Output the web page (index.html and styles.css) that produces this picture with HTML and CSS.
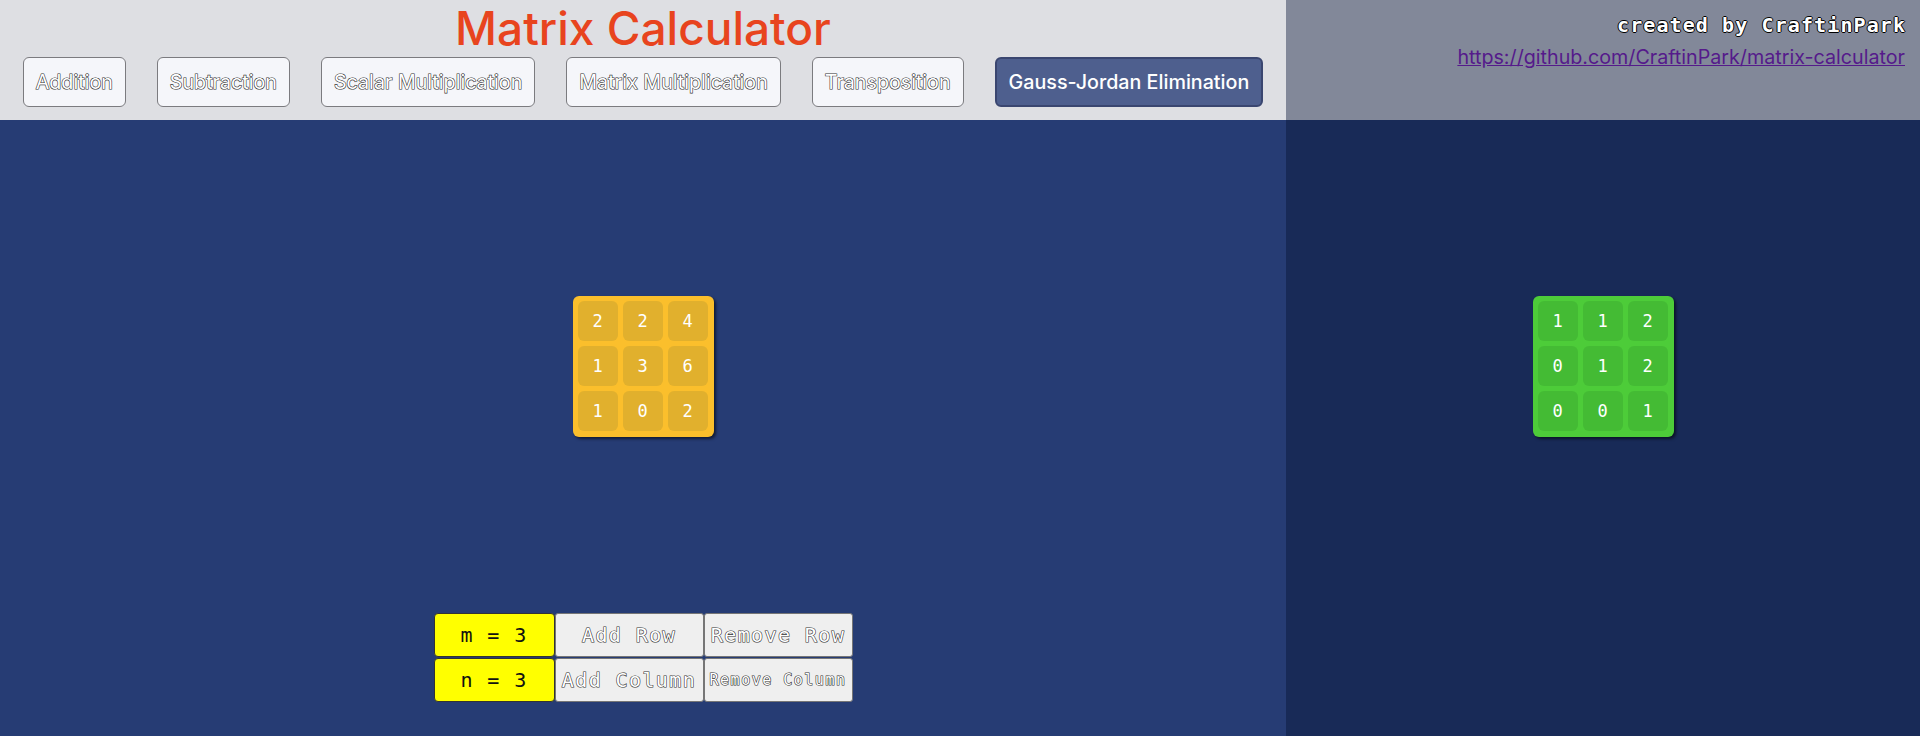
FILE: index.html
```html
<!DOCTYPE html>
<html lang="en">
<head>
<meta charset="utf-8">
<title>Matrix Calculator</title>
<link rel="stylesheet" href="styles.css">
</head>
<body>
<div class="app">
  <header class="top-left">
    <h1 class="title">Matrix Calculator</h1>
    <nav class="ops">
      <button class="op">Addition</button>
      <button class="op">Subtraction</button>
      <button class="op">Scalar Multiplication</button>
      <button class="op">Matrix Multiplication</button>
      <button class="op">Transposition</button>
      <button class="op op-active">Gauss-Jordan Elimination</button>
    </nav>
  </header>
  <header class="top-right">
    <div class="credit">created by CraftinPark</div>
    <a class="repo" href="#">https://github.com/CraftinPark/matrix-calculator</a>
  </header>
  <main class="panel panel-input">
    <div class="stage">
      <div class="matrix matrix-yellow">
        <div class="cell">2</div><div class="cell">2</div><div class="cell">4</div>
        <div class="cell">1</div><div class="cell">3</div><div class="cell">6</div>
        <div class="cell">1</div><div class="cell">0</div><div class="cell">2</div>
      </div>
    </div>
    <div class="controls">
      <div class="dim">m = 3</div>
      <button class="ctl">Add Row</button>
      <button class="ctl">Remove Row</button>
      <div class="dim">n = 3</div>
      <button class="ctl">Add Column</button>
      <button class="ctl ctl-small">Remove Column</button>
    </div>
  </main>
  <section class="panel panel-output">
    <div class="stage">
      <div class="matrix matrix-green">
        <div class="cell">1</div><div class="cell">1</div><div class="cell">2</div>
        <div class="cell">0</div><div class="cell">1</div><div class="cell">2</div>
        <div class="cell">0</div><div class="cell">0</div><div class="cell">1</div>
      </div>
    </div>
  </section>
</div>
</body>
</html>
```

FILE: styles.css
```css
* { box-sizing: border-box; }
html, body { margin: 0; padding: 0; }
body {
  width: 1920px;
  height: 736px;
  overflow: hidden;
  font-family: "Inter", "Noto Sans", sans-serif;
}
.app {
  display: grid;
  grid-template-columns: 1286px 1fr;
  grid-template-rows: 120px 1fr;
  height: 736px;
}
.top-left {
  background: #dedfe3;
  display: flex;
  flex-direction: column;
  align-items: center;
}
.title {
  margin: 0;
  height: 57px;
  line-height: 56px;
  font-size: 46px;
  font-weight: 500;
  color: #e8441e;
}
.ops {
  display: flex;
  gap: 31px;
  justify-content: center;
}
.op {
  height: 50px;
  padding: 0 12px;
  border: 1px solid #7b7b7f;
  border-radius: 6px;
  background: #f5f6fa;
  font-family: "Inter", "Noto Sans", sans-serif;
  font-size: 19.7px;
  color: #ffffff;
  -webkit-text-stroke: 1.2px #333333;
  paint-order: stroke fill;
}
.op-active {
  background: #4e5f8e;
  border: 2px solid #3a4670;
  color: #ffffff;
  -webkit-text-stroke: 0;
  font-weight: 500;
}
.top-right {
  background: #828899;
  text-align: right;
  padding: 13px 15px 0 0;
}
.credit {
  font-family: "DejaVu Sans Mono", monospace;
  font-size: 20px;
  font-weight: bold;
  letter-spacing: 1.1px;
  margin-right: -1.1px;
  line-height: 24px;
  color: #ffffff;
  text-shadow: 1px 0 0 #000, -1px 0 0 #000, 0 1px 0 #000, 0 -1px 0 #000;
}
.repo {
  display: inline-block;
  margin-top: 8px;
  font-size: 19.7px;
  line-height: 24px;
  color: #551a8b;
}
.panel {
  display: flex;
  flex-direction: column;
}
.panel-input { background: #263c74; }
.panel-output { background: #182a57; padding-bottom: 123px; }
.stage {
  flex: 1;
  display: flex;
  align-items: center;
  justify-content: center;
}
.matrix {
  display: grid;
  grid-template-columns: repeat(3, 40px);
  grid-auto-rows: 40px;
  gap: 5px;
  padding: 5px 6px 6px 5px;
  border-radius: 6px;
  box-shadow: 2px 2px 3px rgba(0, 0, 0, 0.55);
}
.matrix-yellow { background: #fbbf2c; }
.matrix-yellow .cell { background: #e1b02d; }
.matrix-green { background: #4dcc39; }
.matrix-green .cell { background: #44bb34; }
.cell {
  display: flex;
  align-items: center;
  justify-content: center;
  border-radius: 6px;
  font-family: "DejaVu Sans Mono", monospace;
  font-size: 17px;
  color: #ffffff;
}
.controls {
  display: grid;
  grid-template-columns: 121px 149px 149px;
  grid-auto-rows: 44px;
  row-gap: 1px;
  justify-content: center;
  margin: 0 auto 34px;
}
.dim {
  display: flex;
  align-items: center;
  justify-content: center;
  background: #ffff00;
  border: 1px solid #333;
  border-radius: 4px;
  font-family: "DejaVu Sans Mono", monospace;
  font-size: 20px;
  letter-spacing: 1.4px;
  color: #111;
}
.ctl {
  background: #efefef;
  border: 1px solid #767676;
  border-radius: 3px;
  padding: 0;
  font-family: "DejaVu Sans Mono", monospace;
  font-size: 20px;
  letter-spacing: 1.4px;
  color: #ffffff;
  -webkit-text-stroke: 1.2px #333333;
  paint-order: stroke fill;
}
.ctl-small { font-size: 15px; letter-spacing: 1.5px; }
```
